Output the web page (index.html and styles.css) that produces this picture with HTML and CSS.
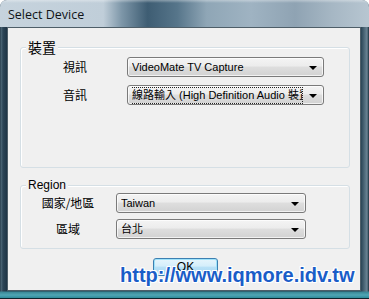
FILE: index.html
```html
<!DOCTYPE html>
<html>
<head>
<meta charset="utf-8">
<link rel="stylesheet" href="styles.css">
</head>
<body>
<div class="window">
  <div class="titlebar"><span class="title">Select Device</span></div>
  <div class="client">
    <div class="group g1">
      <span class="legend big">裝置</span>
      <div class="rows rows1">
        <span class="label">視訊</span>
        <div class="combo"><span class="ctext">VideoMate TV Capture</span><span class="arrow"></span></div>
        <span class="label">音訊</span>
        <div class="combo focus"><span class="ctext"><span class="dotted">線路輸入 (High Definition Audio 裝置)</span></span><span class="arrow"></span></div>
      </div>
    </div>
    <div class="group g2">
      <span class="legend">Region</span>
      <div class="rows rows2">
        <span class="label">國家/地區</span>
        <div class="combo"><span class="ctext">Taiwan</span><span class="arrow"></span></div>
        <span class="label">區域</span>
        <div class="combo"><span class="ctext">台北</span><span class="arrow"></span></div>
      </div>
    </div>
    <div class="buttons"><button class="ok">OK</button></div>
  </div>
  <div class="watermark">http://www.iqmore.idv.tw</div>
</div>
</body>
</html>
```
FILE: styles.css
```css
* { box-sizing: border-box; }
html, body { margin: 0; padding: 0; background: #ffffff; }
body { width: 369px; height: 299px; overflow: hidden; }

.window {
  position: relative;
  width: 369px;
  height: 299px;
  border-radius: 7px 7px 0 0;
  overflow: hidden;
  display: flex;
  flex-direction: column;
  background:
    linear-gradient(to top, #10222c 0, #10222c 1px, #2f8a9a 1px, #4fa6b4 4px, #3a8796 7px, transparent 8px),
    linear-gradient(to right, #1a2e3c 0, #4e6878 1px, #2c4556 3px, #1e3445 7px, transparent 7px, transparent 361px, #2a4556 361px, #6a8494 367px, #1a2e3c 369px),
    linear-gradient(to bottom, #8aa2b4 0, #3c5a6e 40%, #24404f 100%);
  font-family: "Liberation Sans", Arial, sans-serif;
}

.titlebar {
  height: 27px;
  flex: none;
  padding: 5px 0 0 8px;
  background:
    linear-gradient(to bottom, rgba(255,255,255,0.35) 0, rgba(255,255,255,0) 3px),
    linear-gradient(to right, #c6d3dd 0, #c0ced9 28%, #7d96a8 33%, #3e5d73 40%, #56758a 48%, #8fa6b6 56%, #9fb3c2 68%, #8fa3b3 80%, #a6b7c4 90%, #b7c6d1 100%);
}
.title {
  font-family: "Open Sans", "Noto Sans", sans-serif;
  font-size: 12.5px;
  line-height: 17px;
  color: #101418;
}

.client {
  margin: 0 8px 8px 7px;
  height: 264px;
  background: #f0f0f0;
  border: 1px solid #4e5e68;
  display: flex;
  flex-direction: column;
}

.group {
  margin-left: 12px;
  width: 330px;
  border: 1px solid #d5dfe5;
  border-radius: 3px;
  box-shadow: inset 1px 1px 0 #ffffff;
}
.g1 { margin-top: 19px; padding-bottom: 62px; }
.g2 { margin-top: 17px; padding-bottom: 9px; }

.legend {
  display: block;
  width: fit-content;
  margin: -8px 0 0 5px;
  padding: 0 2px;
  background: #f0f0f0;
  font-size: 12px;
  line-height: 14px;
  color: #000;
  font-family: "Liberation Sans", Arial, "Noto Sans CJK TC", sans-serif;
}
.legend.big {
  margin-top: -9px;
  font-family: "Noto Sans CJK TC", sans-serif;
  font-size: 14px;
  line-height: 16px;
}

.rows {
  display: grid;
  align-items: center;
}
.rows1 {
  margin-top: 2px;
  padding-left: 42px;
  grid-template-columns: 64px 197px;
  row-gap: 8px;
}
.rows2 {
  margin-top: 1px;
  padding-left: 9px;
  grid-template-columns: 76px 190px;
  column-gap: 10px;
  row-gap: 6px;
}
.rows2 .label { text-align: center; }

.label {
  font-family: "Noto Sans CJK TC", sans-serif;
  font-size: 12px;
  line-height: 16px;
  color: #000;
}

.combo {
  height: 20px;
  border: 1px solid #7a7a7a;
  border-radius: 3px;
  background: linear-gradient(to bottom, #f4f4f4 0, #ececec 45%, #dedede 50%, #d2d2d2 100%);
  box-shadow: inset 0 0 0 1px rgba(255,255,255,0.7);
  display: flex;
  align-items: center;
  padding-left: 4px;
  overflow: hidden;
}
.ctext {
  flex: 1;
  min-width: 0;
  white-space: nowrap;
  overflow: hidden;
  font-family: "Liberation Sans", Arial, "Noto Sans CJK TC", sans-serif;
  font-size: 11px;
  color: #000;
  line-height: 16px;
}
.dotted {
  display: block;
  border: 1px dotted #222;
  padding: 0 0 0 1px;
  margin-left: -2px;
  overflow: hidden;
  white-space: nowrap;
  line-height: 15px;
}
.arrow {
  flex: none;
  width: 0;
  height: 0;
  border-left: 4px solid transparent;
  border-right: 4px solid transparent;
  border-top: 4px solid #000;
  margin: 1px 6px 0 6px;
}

.buttons { padding: 8px 0 0 145px; }
.ok {
  width: 65px;
  height: 18px;
  padding: 0;
  border: 1px solid #3c7fb1;
  border-radius: 3px;
  background: linear-gradient(to bottom, #e6f5fc 0, #d4eefb 45%, #b9e1f7 50%, #a7d8f4 100%);
  box-shadow: inset 0 0 0 1px #9ee3fb;
  font-family: "Liberation Sans", Arial, sans-serif;
  font-size: 12px;
  color: #000;
  line-height: 14px;
}

.watermark {
  position: absolute;
  left: 120px;
  top: 263px;
  font-family: "Liberation Sans", Arial, sans-serif;
  font-weight: bold;
  font-size: 20px;
  line-height: 24px;
  color: #1a5dc8;
  text-shadow: 1px 0 0 #fff, -1px 0 0 #fff, 0 1px 0 #fff, 0 -1px 0 #fff, 1px 1px 0 #fff, -1px -1px 0 #fff, 1px -1px 0 #fff, -1px 1px 0 #fff;
  white-space: nowrap;
}
```
